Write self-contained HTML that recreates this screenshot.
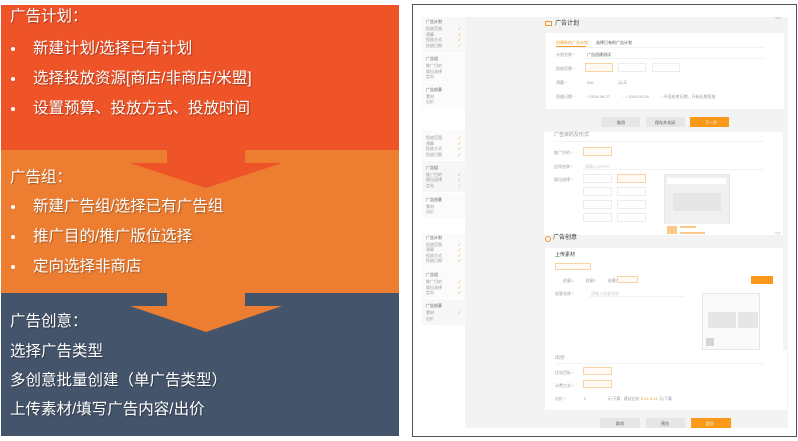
<!DOCTYPE html>
<html><head><meta charset="utf-8"><style>
*{margin:0;padding:0;box-sizing:border-box}
body{width:798px;height:441px;background:#fff;position:relative;overflow:hidden;font-family:"Liberation Sans","Noto Sans CJK SC",sans-serif}
.a{position:absolute}
.t{position:absolute;color:#fff;font-size:15.5px;white-space:nowrap;text-shadow:1px 1px 1px rgba(0,0,0,.3);line-height:20px}
.b{position:absolute;left:11px;width:4px;height:4px;border-radius:50%;background:#fff}
.s{position:absolute;font-size:4px;color:#999;white-space:nowrap;line-height:5px}
.w{position:absolute;background:#fff}
.bt{position:absolute;border:1px solid #f7d3a6;background:#fffaf3}
.bo{position:absolute;border:1px solid #ececec;background:#fff}
.ck{position:absolute;font-size:4px;color:#f39a2b}
</style></head><body>
<div class="a" style="left:1px;top:5px;width:398px;height:145px;background:#EF5328"></div>
<div class="a" style="left:1px;top:150px;width:398px;height:143px;background:#EC7D31"></div>
<div class="a" style="left:1px;top:293px;width:398px;height:143px;background:#44546A"></div>
<div class="a" style="left:167px;top:149px;width:78px;height:15px;background:#EF5328"></div>
<div class="a" style="left:130px;top:163px;width:0;height:0;border-left:76px solid transparent;border-right:76px solid transparent;border-top:25px solid #EF5328"></div>
<div class="a" style="left:167px;top:292px;width:78px;height:15px;background:#EC7D31"></div>
<div class="a" style="left:130px;top:306px;width:0;height:0;border-left:76px solid transparent;border-right:76px solid transparent;border-top:26px solid #EC7D31"></div>

<div class="t" style="left:10px;top:7px">广告计划：</div>
<div class="b" style="top:47px"></div><div class="t" style="left:33px;top:39px">新建计划/选择已有计划</div>
<div class="b" style="top:77px"></div><div class="t" style="left:33px;top:69px">选择投放资源[商店/非商店/米盟]</div>
<div class="b" style="top:107px"></div><div class="t" style="left:33px;top:99px">设置预算、投放方式、投放时间</div>

<div class="t" style="left:10px;top:168px">广告组：</div>
<div class="b" style="top:205px"></div><div class="t" style="left:33px;top:197px">新建广告组/选择已有广告组</div>
<div class="b" style="top:235px"></div><div class="t" style="left:33px;top:227px">推广目的/推广版位选择</div>
<div class="b" style="top:265px"></div><div class="t" style="left:33px;top:257px">定向选择非商店</div>

<div class="t" style="left:10px;top:312px">广告创意：</div>
<div class="t" style="left:10px;top:342px">选择广告类型</div>
<div class="t" style="left:10px;top:371px">多创意批量创建（单广告类型）</div>
<div class="t" style="left:10px;top:400px">上传素材/填写广告内容/出价</div>

<div class="a" style="left:412px;top:4px;width:385px;height:433px;border:1.5px solid #555;background:#fff"></div>
<div class="a" style="left:465px;top:17px;width:323px;height:411px;background:#f3f3f3"></div>
<div class="a" style="left:422px;top:17px;width:43px;height:35px;background:#f8f8f8"></div>
<div class="a" style="left:422px;top:53px;width:43px;height:29px;background:#fbfbfb"></div>
<div class="a" style="left:422px;top:83px;width:43px;height:25px;background:#fbfbfb"></div>
<div class="a" style="left:422px;top:130px;width:43px;height:30px;background:#fbfbfb"></div>
<div class="a" style="left:422px;top:161px;width:43px;height:31px;background:#f6f6f6"></div>
<div class="a" style="left:422px;top:193px;width:43px;height:25px;background:#fbfbfb"></div>
<div class="a" style="left:422px;top:234px;width:43px;height:34px;background:#fbfbfb"></div>
<div class="a" style="left:422px;top:269px;width:43px;height:29px;background:#fbfbfb"></div>
<div class="a" style="left:422px;top:299px;width:43px;height:26px;background:#f7f7f7"></div>
<div class="s" style="left:426px;top:19px;color:#555">广告计划</div><div class="s" style="left:426px;top:26px">投放范围</div><div class="ck" style="left:458px;top:26px">✓</div><div class="s" style="left:426px;top:32px">预算</div><div class="ck" style="left:458px;top:32px">✓</div><div class="s" style="left:426px;top:37px">投放方式</div><div class="ck" style="left:458px;top:37px">✓</div><div class="s" style="left:426px;top:43px">投放日期</div><div class="ck" style="left:458px;top:43px">✓</div>
<div class="s" style="left:426px;top:56px;color:#555">广告组</div><div class="s" style="left:426px;top:63px">推广目的</div><div class="s" style="left:426px;top:69px">版位选择</div><div class="s" style="left:426px;top:74px">定向</div>
<div class="s" style="left:426px;top:87px;color:#555">广告创意</div><div class="s" style="left:426px;top:94px">素材</div><div class="s" style="left:426px;top:99px">出价</div>
<div class="s" style="left:426px;top:135px">投放范围</div><div class="ck" style="left:458px;top:135px">✓</div><div class="s" style="left:426px;top:141px">预算</div><div class="ck" style="left:458px;top:141px">✓</div><div class="s" style="left:426px;top:146px">投放方式</div><div class="ck" style="left:458px;top:146px">✓</div><div class="s" style="left:426px;top:152px">投放日期</div><div class="ck" style="left:458px;top:152px">✓</div>
<div class="s" style="left:426px;top:165px;color:#555">广告组</div><div class="s" style="left:426px;top:172px">推广目的</div><div class="ck" style="left:458px;top:172px">✓</div><div class="s" style="left:426px;top:177px">版位选择</div><div class="ck" style="left:458px;top:177px">✓</div><div class="s" style="left:426px;top:183px">定向</div><div class="ck" style="left:458px;top:183px">✓</div>
<div class="s" style="left:426px;top:197px;color:#555">广告创意</div><div class="s" style="left:426px;top:204px">素材</div><div class="s" style="left:426px;top:209px">出价</div>
<div class="s" style="left:426px;top:235px;color:#555">广告计划</div><div class="s" style="left:426px;top:242px">投放范围</div><div class="ck" style="left:458px;top:242px">✓</div><div class="s" style="left:426px;top:247px">预算</div><div class="ck" style="left:458px;top:247px">✓</div><div class="s" style="left:426px;top:253px">投放方式</div><div class="ck" style="left:458px;top:253px">✓</div><div class="s" style="left:426px;top:258px">投放日期</div><div class="ck" style="left:458px;top:258px">✓</div>
<div class="s" style="left:426px;top:272px;color:#555">广告组</div><div class="s" style="left:426px;top:279px">推广目的</div><div class="ck" style="left:458px;top:279px">✓</div><div class="s" style="left:426px;top:285px">版位选择</div><div class="ck" style="left:458px;top:285px">✓</div><div class="s" style="left:426px;top:290px">定向</div><div class="ck" style="left:458px;top:290px">✓</div>
<div class="s" style="left:426px;top:303px;color:#555">广告创意</div><div class="s" style="left:426px;top:310px">素材</div><div class="ck" style="left:458px;top:310px">✓</div><div class="s" style="left:426px;top:316px">出价</div>

<div class="a" style="left:545px;top:21px;width:7px;height:5px;border:1.2px solid #f39a2b"></div>
<div class="s" style="left:555px;top:21px;font-size:6px;color:#333;line-height:7px">广告计划</div>
<div class="s" style="left:775px;top:19px;font-size:6px">﹀</div>
<div class="w" style="left:546px;top:33px;width:238px;height:76px"></div>
<div class="s" style="left:556px;top:40px;color:#f39a2b">创建新的广告计划</div>
<div class="a" style="left:556px;top:46px;width:30px;height:1px;background:#f39a2b"></div>
<div class="s" style="left:596px;top:40px;color:#555">选择已有的广告计划</div>
<div class="a" style="left:556px;top:47px;width:208px;height:1px;background:#f2f2f2"></div>
<div class="s" style="left:556px;top:52px">计划名称 <span style="color:#f39a2b">*</span></div><div class="s" style="left:587px;top:52px;color:#555">广告创建测试</div>
<div class="a" style="left:585px;top:58px;width:180px;height:1px;background:#f2f2f2"></div>
<div class="s" style="left:556px;top:66px">投放范围 <span style="color:#f39a2b">*</span></div>
<div class="bt" style="left:585px;top:63px;width:28px;height:9px"></div><div class="bo" style="left:618px;top:63px;width:28px;height:9px"></div><div class="bo" style="left:652px;top:63px;width:28px;height:9px"></div>
<div class="s" style="left:556px;top:80px">预算 <span style="color:#f39a2b">*</span></div><div class="s" style="left:587px;top:80px">200</div><div class="s" style="left:618px;top:80px">元/天</div>
<div class="s" style="left:556px;top:94px">投放日期 <span style="color:#f39a2b">*</span></div><div class="s" style="left:587px;top:94px">▫ 2019-09-27 &nbsp;&nbsp;&nbsp;&nbsp;&nbsp;&nbsp;&nbsp;&nbsp;&nbsp; - &nbsp;▫ 2019-09-28 &nbsp;&nbsp;&nbsp;&nbsp;&nbsp;&nbsp;&nbsp;&nbsp;&nbsp; ▫ 不设结束日期，开始长期投放</div>
<div class="a" style="left:601px;top:117px;width:39px;height:10px;background:#e6e6e6"></div>
<div class="a" style="left:646px;top:117px;width:39px;height:10px;background:#e6e6e6"></div>
<div class="a" style="left:690px;top:117px;width:39px;height:10px;background:#fb9a1a"></div>
<div class="s" style="left:617px;top:120px;color:#555">取消</div><div class="s" style="left:655px;top:120px;color:#555">保存并关闭</div><div class="s" style="left:705px;top:120px;color:#fff">下一步</div>
<div class="w" style="left:544px;top:132px;width:239px;height:103px"></div>
<div class="s" style="left:554px;top:133px;font-size:5px">广告目的及形式</div>
<div class="a" style="left:554px;top:141px;width:210px;height:1px;background:#f2f2f2"></div>
<div class="s" style="left:554px;top:150px">推广目的 <span style="color:#f39a2b">*</span></div><div class="bt" style="left:583px;top:147px;width:29px;height:9px"></div>
<div class="s" style="left:554px;top:164px">应用名称 <span style="color:#f39a2b">*</span></div><div class="s" style="left:585px;top:164px;color:#ccc">请输入APPID</div>
<div class="a" style="left:583px;top:169px;width:180px;height:1px;background:#f2f2f2"></div>
<div class="s" style="left:554px;top:177px">版位选择 <span style="color:#f39a2b">*</span></div>
<div class="bo" style="left:583px;top:174px;width:29px;height:9px"></div><div class="bt" style="left:617px;top:174px;width:29px;height:9px"></div>
<div class="bo" style="left:583px;top:187px;width:29px;height:9px"></div><div class="bo" style="left:617px;top:187px;width:29px;height:9px"></div>
<div class="bo" style="left:583px;top:200px;width:29px;height:9px"></div><div class="bo" style="left:617px;top:200px;width:29px;height:9px"></div>
<div class="bo" style="left:583px;top:213px;width:29px;height:9px"></div><div class="bo" style="left:617px;top:213px;width:29px;height:9px"></div>
<div class="a" style="left:664px;top:174px;width:66px;height:61px;background:#f0f0f0;border:1px solid #e6e6e6"></div>
<div class="a" style="left:667px;top:178px;width:59px;height:6px;background:#fff"></div>
<div class="a" style="left:673px;top:193px;width:48px;height:18px;background:#e6e6e6"></div>
<div class="a" style="left:664px;top:224px;width:66px;height:11px;background:#fff"></div>
<div class="a" style="left:667px;top:226px;width:10px;height:8px;background:#fbc98a"></div>
<div class="a" style="left:680px;top:226px;width:16px;height:2px;background:#fbc98a"></div>
<div class="a" style="left:680px;top:232px;width:25px;height:2px;background:#fbc98a"></div>
<div class="a" style="left:545px;top:236px;width:6px;height:6px;border-radius:50%;border:1.5px solid #f39a2b"></div>
<div class="s" style="left:553px;top:235px;font-size:6px;color:#333;line-height:7px">广告创意</div>
<div class="s" style="left:775px;top:234px;font-size:6px">﹀</div>
<div class="w" style="left:545px;top:248px;width:238px;height:102px"></div>
<div class="s" style="left:555px;top:253px;font-size:5px;color:#333">上传素材</div>
<div class="bt" style="left:555px;top:263px;width:36px;height:7px"></div>
<div class="s" style="left:563px;top:278px">创意1 &nbsp;&nbsp;&nbsp;&nbsp;&nbsp;&nbsp;&nbsp;&nbsp;&nbsp; 创意2 &nbsp;&nbsp;&nbsp;&nbsp;&nbsp;&nbsp;&nbsp;&nbsp;&nbsp; 创意3</div>
<div class="bt" style="left:617px;top:276px;width:21px;height:7px"></div>
<div class="a" style="left:751px;top:276px;width:22px;height:8px;background:#fb9a1a"></div>
<div class="s" style="left:555px;top:291px">创意名称 <span style="color:#f39a2b">*</span></div><div class="s" style="left:591px;top:291px;color:#ccc">请输入创意名称</div>
<div class="a" style="left:589px;top:296px;width:95px;height:1px;background:#f2f2f2"></div>
<div class="a" style="left:702px;top:293px;width:58px;height:57px;background:#fafafa;border:1px solid #e6e6e6"></div>
<div class="a" style="left:708px;top:312px;width:28px;height:16px;background:#e6e6e6"></div>
<div class="a" style="left:738px;top:312px;width:20px;height:16px;background:#e6e6e6"></div>
<div class="a" style="left:706px;top:338px;width:8px;height:8px;background:#d6d6d6"></div>
<div class="w" style="left:545px;top:350px;width:242px;height:60px"></div>
<div class="s" style="left:555px;top:356px;font-size:5px">出价</div>
<div class="a" style="left:555px;top:363px;width:210px;height:1px;background:#f2f2f2"></div>
<div class="s" style="left:555px;top:370px">优化目标 <span style="color:#f39a2b">*</span></div><div class="bt" style="left:583px;top:367px;width:29px;height:8px"></div>
<div class="s" style="left:555px;top:383px">计费方式 <span style="color:#f39a2b">*</span></div><div class="bt" style="left:583px;top:380px;width:29px;height:8px"></div>
<div class="s" style="left:555px;top:396px">出价 <span style="color:#f39a2b">*</span></div><div class="s" style="left:584px;top:396px">2 &nbsp;&nbsp;&nbsp;&nbsp;&nbsp;&nbsp;&nbsp;&nbsp;&nbsp;&nbsp;&nbsp;&nbsp;&nbsp;&nbsp;&nbsp;&nbsp;&nbsp; 元/下载 &nbsp; 建议出价 <span style="color:#f39a2b">0.01-4.41</span> 元/下载</div>
<div class="a" style="left:600px;top:418px;width:40px;height:10px;background:#e6e6e6"></div>
<div class="a" style="left:646px;top:418px;width:39px;height:10px;background:#e6e6e6"></div>
<div class="a" style="left:691px;top:418px;width:40px;height:10px;background:#fb9a1a"></div>
<div class="s" style="left:616px;top:421px;color:#555">取消</div><div class="s" style="left:661px;top:421px;color:#555">预览</div><div class="s" style="left:706px;top:421px;color:#fff">提交</div>
</body></html>
